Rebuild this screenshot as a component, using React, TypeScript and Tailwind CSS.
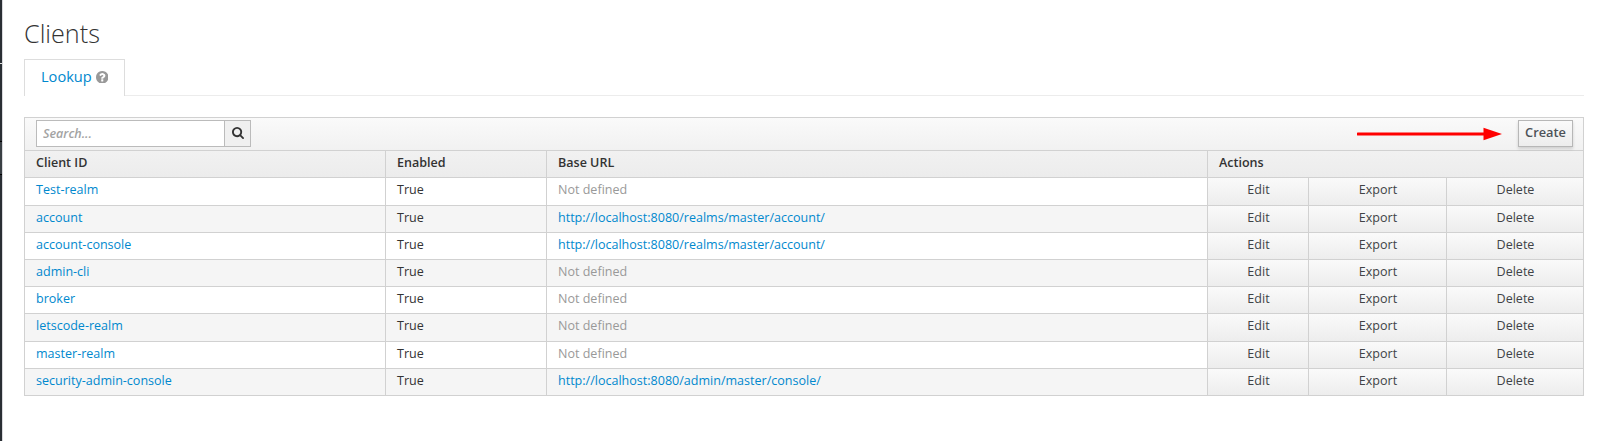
import React from "react";

type Client = { id: string; url?: string; tall?: boolean };

const clients: Client[] = [
  { id: "Test-realm", tall: true },
  { id: "account", url: "http://localhost:8080/realms/master/account/" },
  { id: "account-console", url: "http://localhost:8080/realms/master/account/" },
  { id: "admin-cli" },
  { id: "broker" },
  { id: "letscode-realm", tall: true },
  { id: "master-realm" },
  { id: "security-admin-console", url: "http://localhost:8080/admin/master/console/" },
];

const cell = "border-r border-b border-[#d1d1d1] px-[11px] leading-[23px] truncate";
const action =
  "border-r border-b border-[#d1d1d1] bg-linear-to-b from-[#fafafa] to-[#ededed] pl-px text-center leading-[23px] text-[#404346]";
const head = "border-r border-[#d1d1d1] px-[11px] leading-[23px]";

function SearchIcon() {
  return (
    <svg className="mb-[2px] size-[12px]" viewBox="64 128 1664 1664" fill="currentColor">
      <path d="M1216 832q0-185-131.500-316.500t-316.500-131.500-316.500 131.500-131.500 316.500 131.500 316.500 316.500 131.500 316.500-131.500 131.500-316.500zm512 832q0 52-38 90t-90 38q-54 0-90-38l-343-342q-179 124-399 124-143 0-273.500-55.500t-225-150-150-225-55.500-273.500 55.500-273.500 150-225 225-150 273.500-55.500 273.500 55.500 225 150 150 225 55.500 273.500q0 220-124 399l343 343q37 37 37 90z" />
    </svg>
  );
}

function HelpIcon() {
  return (
    <svg className="mb-[2px] size-[12.500px] text-[#999999]" viewBox="128 128 1536 1536" fill="currentColor">
      <path d="M1024 1376v-192q0-14-9-23t-23-9h-192q-14 0-23 9t-9 23v192q0 14 9 23t23 9h192q14 0 23-9t9-23zm256-672q0-88-55.500-163t-138.500-116-170-41q-243 0-371 213-15 24 8 42l132 100q7 6 19 6 16 0 25-12 53-68 86-92 34-24 86-24 48 0 85.500 26t37.500 59q0 38-20 61t-68 45q-63 28-115.500 86.500t-52.500 125.500v36q0 14 9 23t23 9h192q14 0 23-9t9-23q0-19 21.500-49.500t54.500-49.500q32-18 49-28.500t46-35 44.500-48 28-60.500 12.500-81zm384 192q0 209-103 385.500t-279.500 279.500-385.500 103-385.500-103-279.500-279.500-103-385.500 103-385.500 279.500-279.500 385.500-103 385.500 103 279.500 279.500 103 385.500z" />
    </svg>
  );
}

export default function App() {
  return (
    <div className="flex h-[441px] w-[1603px] overflow-hidden bg-white font-['Open_Sans',sans-serif] text-[12.54px] text-[#333333]">
      <aside className="flex w-[3px] shrink-0 flex-col border-r border-[#d9d9dd] bg-[#292e34]">
        <div className="mt-[63px] h-px bg-[#e0e0e0]" />
        <div className="mt-[77px] h-[34px] border-y border-black bg-[#393f44]" />
      </aside>
      <main className="ml-[21px] w-[1560px]">
        <h1 className="mt-[14px] h-[45px] text-[25.2px] leading-[38px] font-light">Clients</h1>
        <div className="flex h-[37px]">
          <div className="flex w-[101px] items-center gap-[4px] border border-b-0 border-[#dddddd] pl-[16px] text-[14.6px] text-[#0088ce]">
            <span className="pb-[4px] leading-[32px]">Lookup</span>
            <HelpIcon />
          </div>
          <div className="grow border-b border-[#ececec]" />
        </div>
        <section className="mt-[21px] border-t border-l border-[#d1d1d1]">
          <div className="flex h-[33px] items-start justify-between border-r border-b border-[#d1d1d1] bg-linear-to-b from-[#fafafa] to-[#f1f1f1] pt-[2px] pr-[10px] pl-[11px]">
            <div className="flex h-[27px] w-[215px] border border-[#bbbbbb]">
              <input
                placeholder="Search..."
                className="w-[187px] bg-white px-[6px] pt-px font-semibold italic placeholder:text-[#a3a3a3]"
              />
              <button className="flex grow items-center justify-center border-l border-[#bbbbbb] bg-[#f0f0f0]">
                <SearchIcon />
              </button>
            </div>
            <div className="flex">
              <svg className="mt-[7px] mr-[16px] h-[14px] w-[145px]" viewBox="0 0 145 14">
                <path d="M1 7H128" stroke="#ff0000" strokeWidth="3" strokeLinecap="round" />
                <path d="M126.500 0.700L145 7L126.500 13.300Z" fill="#ff0000" />
              </svg>
              <button className="h-[27px] w-[55px] border border-[#b7b7b7] bg-linear-to-b from-[#fafafa] to-[#ededed] pb-[2px] text-[12.8px] font-semibold text-[#4d5258] shadow-[0_2px_3px_rgba(3,3,3,0.14)]">
                Create
              </button>
            </div>
          </div>
          <div className="grid h-[27px] grid-cols-[361px_161px_661px_376px] border-b border-[#d1d1d1] bg-linear-to-b from-[#f1f1f1] to-[#ececec] font-semibold">
            <div className={head}>Client ID</div>
            <div className={head}>Enabled</div>
            <div className={head}>Base URL</div>
            <div className={head}>Actions</div>
          </div>
          {clients.map((c, i) => (
            <div
              key={c.id}
              className={`grid grid-cols-[361px_161px_661px_101px_138px_137px] ${c.tall ? "h-[28px]" : "h-[27px]"} ${i % 2 ? "bg-[#f5f5f5]" : "bg-white"}`}
            >
              <div className={`${cell} text-[#0088ce]`}>{c.id}</div>
              <div className={cell}>True</div>
              <div className={`${cell} ${c.url ? "text-[#0088ce]" : "text-[#999999]"}`}>{c.url ?? "Not defined"}</div>
              <div className={action}>Edit</div>
              <div className={action}>Export</div>
              <div className={action}>Delete</div>
            </div>
          ))}
        </section>
      </main>
    </div>
  );
}
